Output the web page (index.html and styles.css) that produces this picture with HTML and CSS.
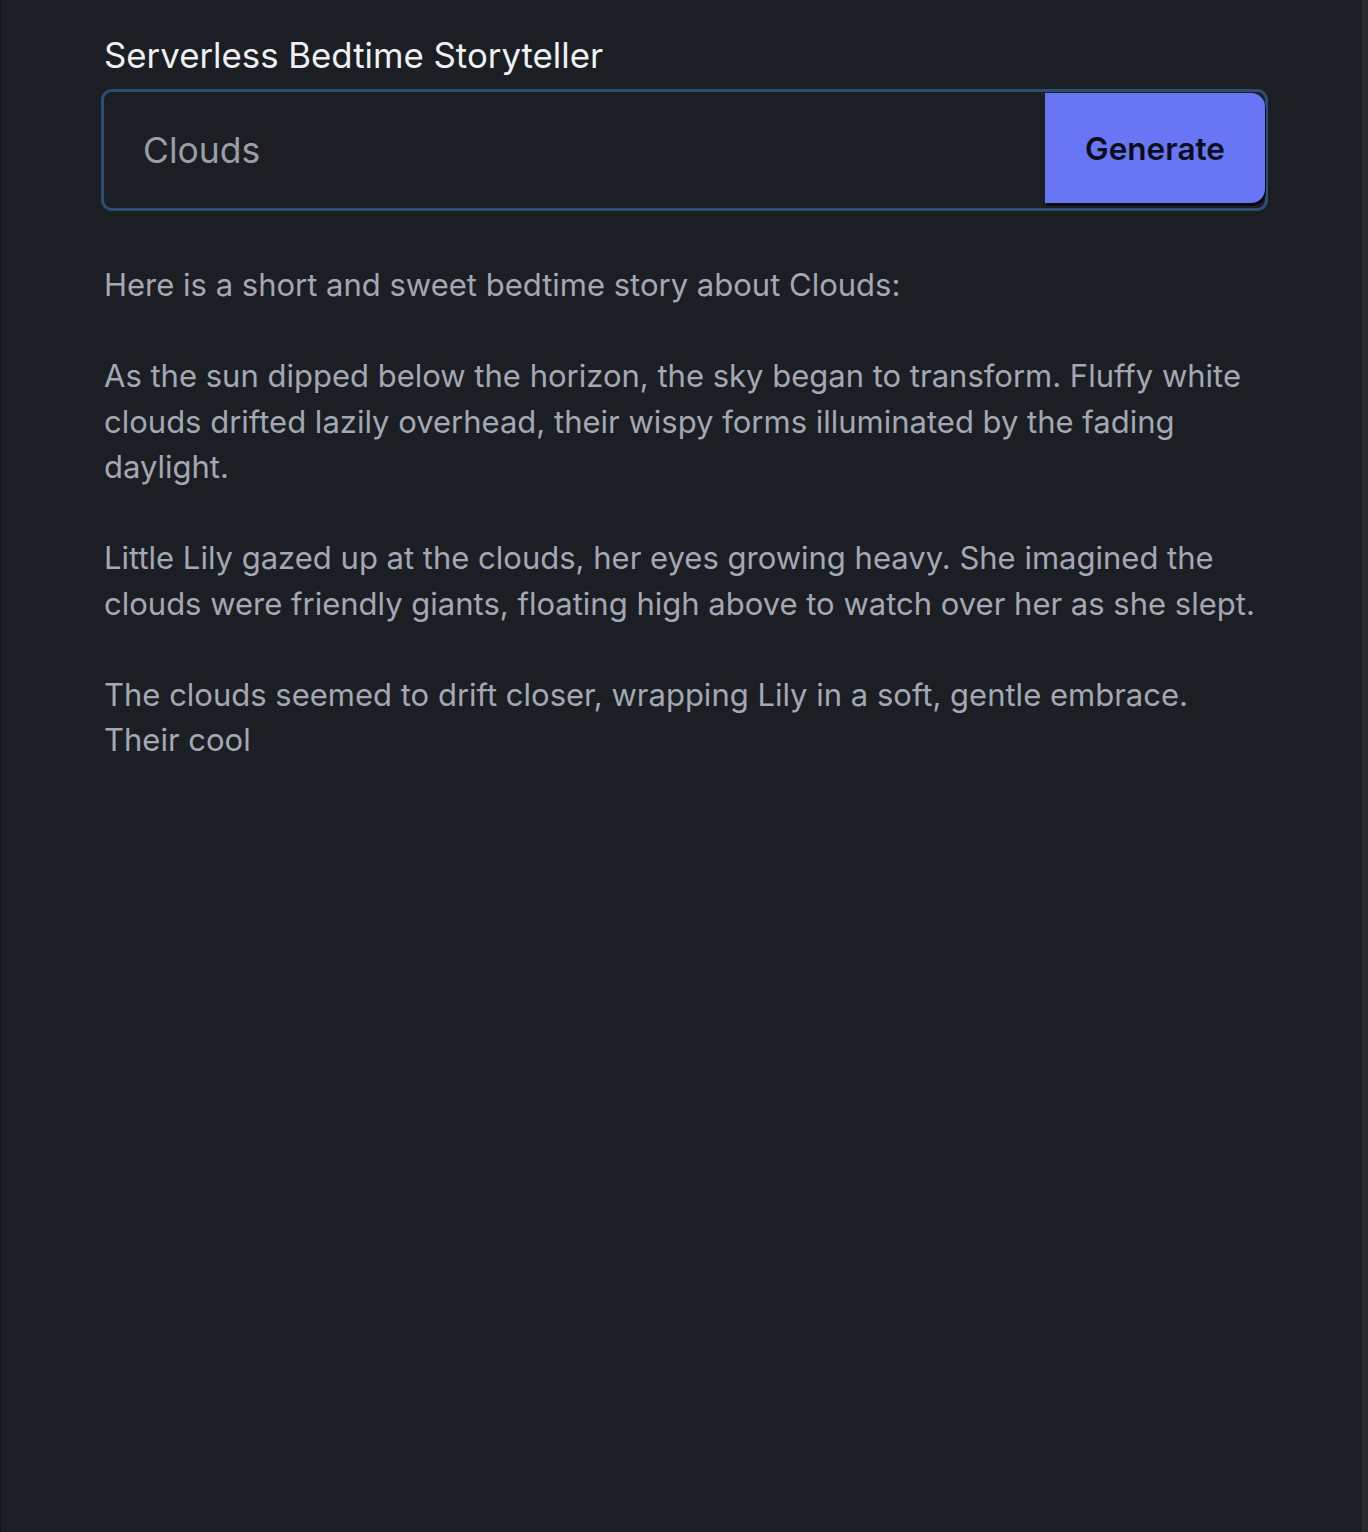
FILE: index.html
```html
<!DOCTYPE html>
<html lang="en">
<head>
<meta charset="utf-8">
<title>Serverless Bedtime Storyteller</title>
<link rel="stylesheet" href="styles.css">
</head>
<body>
<main class="page">
  <h1 class="title">Serverless Bedtime Storyteller</h1>
  <form class="prompt">
    <input class="prompt-input" type="text" value="Clouds">
    <button class="prompt-button" type="button">Generate</button>
  </form>
  <div class="story">Here is a short and sweet bedtime story about Clouds:

As the sun dipped below the horizon, the sky began to transform. Fluffy white clouds drifted lazily overhead, their wispy forms illuminated by the fading daylight.

Little Lily gazed up at the clouds, her eyes growing heavy. She imagined the clouds were friendly giants, floating high above to watch over her as she slept.

The clouds seemed to drift closer, wrapping Lily in a soft, gentle embrace. Their cool</div>
</main>
</body>
</html>
```

FILE: styles.css
```css
html, body {
  margin: 0;
  padding: 0;
}

body {
  background: #1b1f23;
  min-height: 1532px;
  box-sizing: border-box;
  border-left: 1px solid #15181b;
  border-right: 6px solid #2a2b2c;
  font-family: Inter, "Noto Sans", sans-serif;
}

.page {
  width: 1167px;
  margin-left: 100px;
  padding-top: 32px;
}

.title {
  margin: 0 0 11px 3px;
  font-size: 34.8px;
  line-height: 46px;
  font-weight: 400;
  color: #eef0f3;
}

.prompt {
  display: flex;
  height: 122px;
  box-sizing: border-box;
  border: 3px solid #2d4d73;
  border-radius: 11px;
  margin: 0;
}

.prompt-input {
  flex: 1;
  min-width: 0;
  background: transparent;
  border: 0;
  outline: none;
  padding: 0 0 0 39px;
  font-family: inherit;
  font-size: 35.5px;
  color: #9a9ea6;
}

.prompt-button {
  align-self: flex-start;
  width: 220px;
  height: 110px;
  margin-top: 1px;
  border: 0;
  border-radius: 0 14px 14px 0;
  background: #6875f5;
  box-shadow: 1px 3px 0 #0b0c0f;
  color: #0c0e1a;
  font-family: inherit;
  font-size: 31.5px;
  font-weight: 600;
  padding: 0;
}

.story {
  margin: 51px 0 0 3px;
  white-space: pre-wrap;
  font-size: 31px;
  line-height: 45.5px;
  color: #a3a8b3;
}
```
